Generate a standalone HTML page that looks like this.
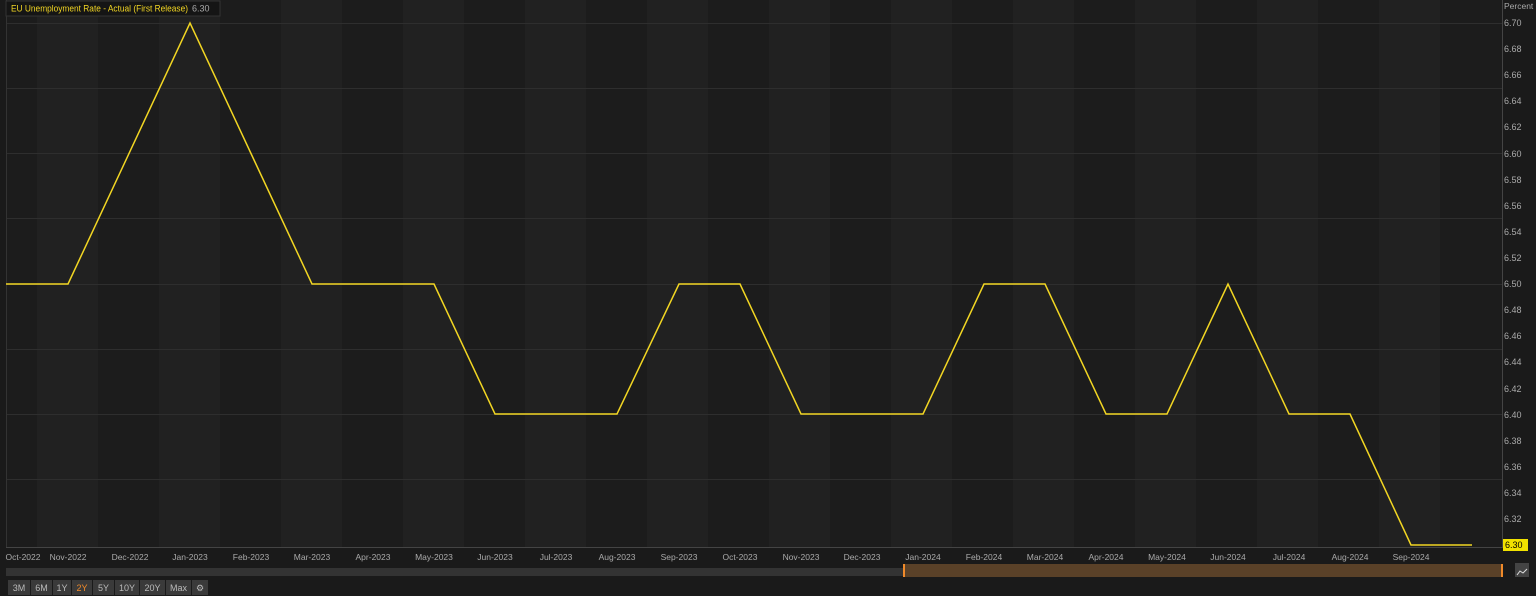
<!DOCTYPE html><html><head><style>
body{margin:0;background:#1a1a1a;width:1536px;height:596px;overflow:hidden;font-family:"Liberation Sans",sans-serif}
svg text{font-family:"Liberation Sans",sans-serif}
</style></head><body>
<svg width="1536" height="596" style="position:absolute;left:0;top:0">
<rect x="0" y="0" width="1536" height="596" fill="#1a1a1a"/>
<rect x="6" y="0" width="1496" height="548" fill="#1c1c1c"/>
<g fill="#212121">
<rect x="37" y="0" width="61" height="548"/><rect x="159" y="0" width="61" height="548"/><rect x="281" y="0" width="61" height="548"/><rect x="403" y="0" width="61" height="548"/><rect x="525" y="0" width="61" height="548"/><rect x="647" y="0" width="61" height="548"/><rect x="769" y="0" width="61" height="548"/><rect x="891" y="0" width="61" height="548"/><rect x="1013" y="0" width="61" height="548"/><rect x="1135" y="0" width="61" height="548"/><rect x="1257" y="0" width="61" height="548"/><rect x="1379" y="0" width="61" height="548"/>
</g>
<g stroke="#2e2e2e" stroke-width="1">
<line x1="6" y1="23.5" x2="1502" y2="23.5"/><line x1="6" y1="88.5" x2="1502" y2="88.5"/><line x1="6" y1="153.5" x2="1502" y2="153.5"/><line x1="6" y1="218.5" x2="1502" y2="218.5"/><line x1="6" y1="284.5" x2="1502" y2="284.5"/><line x1="6" y1="349.5" x2="1502" y2="349.5"/><line x1="6" y1="414.5" x2="1502" y2="414.5"/><line x1="6" y1="479.5" x2="1502" y2="479.5"/>
</g>
<line x1="1502.5" y1="0" x2="1502.5" y2="548" stroke="#444"/>
<line x1="6.5" y1="0" x2="6.5" y2="548" stroke="#333"/>
<line x1="6" y1="547.5" x2="1502" y2="547.5" stroke="#444"/>
<polyline fill="none" stroke="#f2d623" stroke-width="1.5" points="6,284 68,284 190,23 312,284 434,284 495,414 617,414 679,284 740,284 801,414 923,414 984,284 1045,284 1106,414 1167,414 1228,284 1289,414 1350,414 1411,545 1472,545"/>
<g fill="#aaa" font-size="9">
<text x="1504" y="9" font-size="8.5">Percent</text>
<text x="1504" y="26">6.70</text><text x="1504" y="52">6.68</text><text x="1504" y="78">6.66</text><text x="1504" y="104">6.64</text><text x="1504" y="130">6.62</text><text x="1504" y="157">6.60</text><text x="1504" y="183">6.58</text><text x="1504" y="209">6.56</text><text x="1504" y="235">6.54</text><text x="1504" y="261">6.52</text><text x="1504" y="287">6.50</text><text x="1504" y="313">6.48</text><text x="1504" y="339">6.46</text><text x="1504" y="365">6.44</text><text x="1504" y="392">6.42</text><text x="1504" y="418">6.40</text><text x="1504" y="444">6.38</text><text x="1504" y="470">6.36</text><text x="1504" y="496">6.34</text><text x="1504" y="522">6.32</text>
</g>
<rect x="1503" y="539" width="25" height="12" fill="#f2e200"/>
<text x="1505" y="548" font-size="9" fill="#000">6.30</text>
<g fill="#aaa" font-size="8.5" text-anchor="middle">
<text x="23" y="560">Oct-2022</text><text x="68" y="560">Nov-2022</text><text x="130" y="560">Dec-2022</text><text x="190" y="560">Jan-2023</text><text x="251" y="560">Feb-2023</text><text x="312" y="560">Mar-2023</text><text x="373" y="560">Apr-2023</text><text x="434" y="560">May-2023</text><text x="495" y="560">Jun-2023</text><text x="556" y="560">Jul-2023</text><text x="617" y="560">Aug-2023</text><text x="679" y="560">Sep-2023</text><text x="740" y="560">Oct-2023</text><text x="801" y="560">Nov-2023</text><text x="862" y="560">Dec-2023</text><text x="923" y="560">Jan-2024</text><text x="984" y="560">Feb-2024</text><text x="1045" y="560">Mar-2024</text><text x="1106" y="560">Apr-2024</text><text x="1167" y="560">May-2024</text><text x="1228" y="560">Jun-2024</text><text x="1289" y="560">Jul-2024</text><text x="1350" y="560">Aug-2024</text><text x="1411" y="560">Sep-2024</text>
</g>
<rect x="6" y="568" width="898" height="8" fill="#333"/>
<rect x="904" y="564" width="598" height="13" fill="#5a4128"/>
<rect x="903" y="564" width="2" height="13" fill="#f08a2a"/>
<rect x="1501" y="564" width="2" height="13" fill="#f08a2a"/>
<rect x="1515" y="563" width="14" height="14" fill="#444"/>
<path d="M1517 575 l3-4 3 2 4-4" stroke="#ddd" fill="none"/>
<rect x="6" y="1" width="214" height="15" fill="#151515" stroke="#333"/>
<text x="11" y="11.5" font-size="9" fill="#f2d623" textLength="177" lengthAdjust="spacingAndGlyphs">EU Unemployment Rate - Actual (First Release)</text>
<text x="192" y="11.5" font-size="9" fill="#aaa">6.30</text>
<g fill="#3a3a3a">
<rect x="8" y="580" width="22" height="15"/><rect x="31" y="580" width="21" height="15"/><rect x="53" y="580" width="18" height="15"/><rect x="72" y="580" width="20" height="15"/><rect x="93" y="580" width="21" height="15"/><rect x="115" y="580" width="24" height="15"/><rect x="140" y="580" width="25" height="15"/><rect x="166" y="580" width="25" height="15"/><rect x="192" y="580" width="16" height="15"/>
</g>
<g fill="#bbb" font-size="9" text-anchor="middle">
<text x="19" y="591">3M</text><text x="41.5" y="591">6M</text><text x="62" y="591">1Y</text><text x="82" y="591" fill="#f08a2a">2Y</text><text x="103.5" y="591">5Y</text><text x="127" y="591">10Y</text><text x="152.5" y="591">20Y</text><text x="178.5" y="591">Max</text><text x="200" y="591">⚙</text>
</g>
</svg>
</body></html>
